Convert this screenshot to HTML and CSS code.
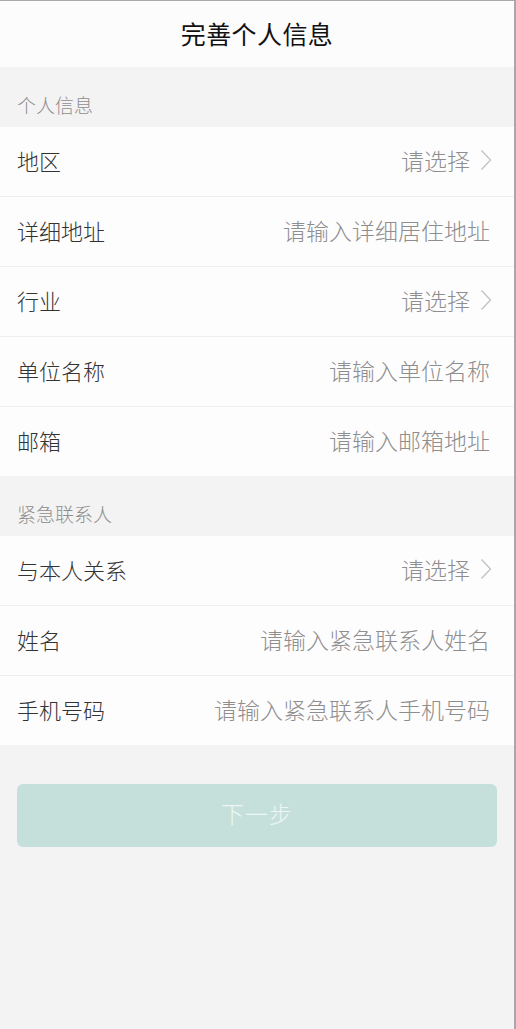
FILE: index.html
```html
<!DOCTYPE html>
<html lang="zh-CN">
<head>
  <meta charset="UTF-8" />
  <meta name="viewport" content="width=device-width, initial-scale=1.0"/>
  <title>完善个人信息</title>
  <link rel="stylesheet" href="styles.css">
</head>
<body>
  <div class="page">
    <header class="top-bar">
      <h1>完善个人信息</h1>
    </header>

    <div class="group-title">个人信息</div>
    <ul class="form-list">
      <li class="row">
        <span class="label">地区</span>
        <span class="pick">请选择</span>
        <svg class="arrow" viewBox="0 0 12 22" width="12" height="22"><path d="M1.5 1.5 L10.5 11 L1.5 20.5" /></svg>
      </li>
      <li class="row">
        <span class="label">详细地址</span>
        <input class="field" type="text" placeholder="请输入详细居住地址" />
      </li>
      <li class="row">
        <span class="label">行业</span>
        <span class="pick">请选择</span>
        <svg class="arrow" viewBox="0 0 12 22" width="12" height="22"><path d="M1.5 1.5 L10.5 11 L1.5 20.5" /></svg>
      </li>
      <li class="row">
        <span class="label">单位名称</span>
        <input class="field" type="text" placeholder="请输入单位名称" />
      </li>
      <li class="row">
        <span class="label">邮箱</span>
        <input class="field" type="text" placeholder="请输入邮箱地址" />
      </li>
    </ul>

    <div class="group-title">紧急联系人</div>
    <ul class="form-list">
      <li class="row">
        <span class="label">与本人关系</span>
        <span class="pick">请选择</span>
        <svg class="arrow" viewBox="0 0 12 22" width="12" height="22"><path d="M1.5 1.5 L10.5 11 L1.5 20.5" /></svg>
      </li>
      <li class="row">
        <span class="label">姓名</span>
        <input class="field" type="text" placeholder="请输入紧急联系人姓名" />
      </li>
      <li class="row">
        <span class="label">手机号码</span>
        <input class="field" type="text" placeholder="请输入紧急联系人手机号码" />
      </li>
    </ul>

    <button class="next-btn" type="button" disabled>下一步</button>
  </div>
</body>
</html>
```

FILE: styles.css
```css
* {
  box-sizing: border-box;
  margin: 0;
  padding: 0;
}

html, body {
  height: 100%;
}

body {
  font-family: "Noto Sans CJK SC", "Noto Sans", sans-serif;
  font-weight: 300;
  background: #f4f3f3;
  color: #333;
}

.page {
  min-height: 100%;
  border-top: 1px solid #a8a8a8;
  border-right: 2px solid #a8a8a8;
  background: #f4f3f3;
}

.top-bar {
  height: 66px;
  padding-bottom: 2px;
  background: #fdfcfd;
  display: flex;
  align-items: center;
  justify-content: center;
}

.top-bar h1 {
  font-size: 25px;
  font-weight: 400;
  color: #111;
  letter-spacing: 0.4px;
}

.group-title {
  height: 60px;
  padding: 25px 17px 0;
  font-size: 19px;
  line-height: 26px;
  color: #8e8e8e;
}

.form-list {
  list-style: none;
  background: #fefdfe;
}

.row {
  height: 70px;
  display: flex;
  align-items: center;
  padding: 0 24px 4px 17px;
  border-bottom: 1px solid #efefef;
}

.row:last-child {
  border-bottom: none;
  height: 69px;
}

.label {
  font-size: 22px;
  color: #333;
  white-space: nowrap;
}

.pick {
  margin-left: auto;
  font-size: 23px;
  color: #8e8e8e;
}

.arrow {
  margin-left: 10px;
  margin-right: -2px;
  fill: none;
  stroke: #c4c4c4;
  stroke-width: 1.4;
}

.field {
  flex: 1;
  min-width: 0;
  border: none;
  outline: none;
  background: transparent;
  text-align: right;
  font-family: inherit;
  font-weight: inherit;
  font-size: 23px;
  color: #333;
}

.field::placeholder {
  color: #8e8e8e;
}

.next-btn {
  display: block;
  width: calc(100% - 34px);
  height: 63px;
  margin: 39px 17px 0;
  padding-bottom: 5px;
  border: none;
  border-radius: 6px;
  background: #c5e0da;
  color: #eef6f4;
  font-family: inherit;
  font-weight: inherit;
  font-size: 23px;
  letter-spacing: 1px;
}
```
